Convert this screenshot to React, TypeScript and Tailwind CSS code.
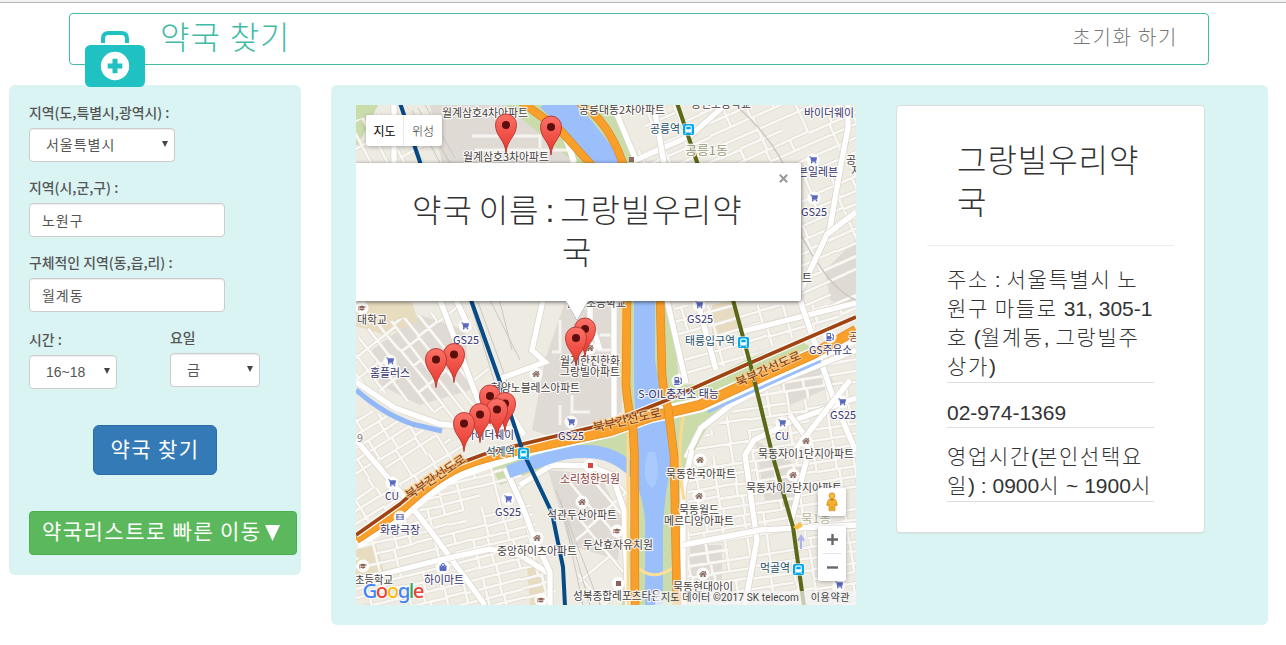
import React from "react";
import {
  FaShoppingCart,
  FaHome,
  FaGraduationCap,
  FaGasPump,
  FaFilm,
  FaShoppingBag,
} from "react-icons/fa";

const FONT = "font-['Liberation_Sans','Noto_Sans_CJK_KR',sans-serif]";

/* Widens the Hangul runs of a line while Latin runs keep their natural spacing. */
function Ko({ children, run: style = "font-light tracking-[0.08em]" }: { children: string; run?: string }) {
  const runs = children.split(/([\uac00-\ud7a3]+)/);
  return (
    <>
      {runs.map((run, i) =>
        i % 2 === 1 ? (
          <span key={i} className={style}>
            {run}
          </span>
        ) : (
          <span key={i}>{run}</span>
        ),
      )}
    </>
  );
}

/* ------------------------------------------------------------------ map */

type Pt = [number, number];

function random(seed: number) {
  let s = seed;
  return () => {
    s = (s * 16807) % 2147483647;
    return s / 2147483647;
  };
}

function streets(cx: number, cy: number, r: number, gap: number, seed: number) {
  const rnd = random(seed);
  let d = "";
  const cross = gap * 1.9;
  for (let y = -r; y <= r; y += gap) {
    let x = -r;
    while (x < r) {
      const len = cross * (1 + Math.floor(rnd() * 4));
      if (rnd() > 0.14) {
        const j = (rnd() - 0.5) * 2;
        d += `M${(cx + x).toFixed(1)} ${(cy + y + j).toFixed(1)}l${len.toFixed(1)} ${((rnd() - 0.5) * 2).toFixed(1)}`;
      }
      x += len;
    }
  }
  for (let x = -r; x <= r; x += cross) {
    let y = -r;
    while (y < r) {
      const len = gap * (1 + Math.floor(rnd() * 3));
      if (rnd() > 0.3) {
        const j = (rnd() - 0.5) * 6;
        d += `M${(cx + x + j).toFixed(1)} ${(cy + y).toFixed(1)}v${len.toFixed(1)}`;
      }
      y += len;
    }
  }
  return d;
}

const districts: { id: string; area: string; c: Pt; r: number; gap: number; rot: number }[] = [
  { id: "nw", area: "M356 120L408 105L430 163H356Z", c: [390, 135], r: 60, gap: 15, rot: 62 },
  { id: "ne", area: "M636 163L650 105H856V310L801 330V163Z", c: [750, 200], r: 170, gap: 12, rot: -24 },
  { id: "w", area: "M372 325L465 305L500 400L480 430L356 382V340Z", c: [425, 370], r: 100, gap: 12, rot: 52 },
  { id: "w2", area: "M356 405L440 436L470 445L400 500L356 530Z", c: [400, 460], r: 100, gap: 11, rot: -32 },
  { id: "sw", area: "M356 548L470 466L520 470L560 605H356Z", c: [450, 545], r: 130, gap: 10, rot: -14 },
  { id: "s", area: "M570 480L630 485L628 605H580Z", c: [600, 545], r: 90, gap: 18, rot: 50 },
  { id: "e1", area: "M675 305H856V312L678 385Z", c: [765, 340], r: 120, gap: 13, rot: -16 },
  { id: "e2", area: "M856 350L752 395L700 440L688 465V605H856Z", c: [780, 490], r: 180, gap: 10.5, rot: -9 },
];

const mainRoads = [
  "M394 105V163",
  "M356 382L395 408L440 424L500 430L520 427",
  "M440 300L478 400L500 432",
  "M543 300L532 350L545 362L502 378L508 410L524 435",
  "M356 440L400 492L430 530L485 605",
  "M380 575L440 560L490 549L520 555L548 573",
  "M505 468L522 505L535 540L550 572V605",
  "M456 300L470 330",
  "M520 485L552 465L590 466L612 475L624 510L628 605",
  "M540 450L552 465",
  "M614 300V425",
  "M590 300V320L600 350",
  "M613 105L636 160L690 136L725 105",
  "M655 112L664 163",
  "M848 105V128L840 170L830 228L801 290",
  "M856 212L826 235",
  "M667 300L686 383",
  "M697 300L716 370",
  "M740 332L856 303",
  "M800 300L812 335L834 400L856 452",
  "M686 458L701 428L732 404L770 385L856 350",
  "M745 605L757 540L745 455L754 440L790 422L856 398",
  "M692 450L683 490V605",
  "M683 545L760 530L856 525",
  "M790 525L806 462L808 440L790 415",
  "M850 380L795 450",
];

const greys = [
  "M430 105H545L585 163H442Z",
  "M565 302H622V412L560 440L532 430L545 360Z",
  "M372 350L420 315L465 330L470 390L420 405L380 385Z",
  "M548 470L600 475L622 520L618 560L570 545Z",
  "M825 270L856 240V310L830 300Z",
  "M755 440L805 470L800 510L765 500Z",
  "M690 545H722V580H690Z",
  "M780 385L825 365L835 385L790 405Z",
];

function Roads({ d, w, color = "#fff", edge = "#d9d4cb" }: { d: string; w: number; color?: string; edge?: string }) {
  return (
    <>
      <path d={d} stroke={edge} strokeWidth={w + 1.4} />
      <path d={d} stroke={color} strokeWidth={w} />
    </>
  );
}

const labels: { t: string; x: number; y: number; w: number; c?: string; s?: number; a?: number }[] = [
  { t: "월계삼호4차아파트", x: 442, y: 117, w: 86 },
  { t: "월계삼호3차아파트", x: 463, y: 161, w: 86 },
  { t: "공릉대동2차아파트", x: 579, y: 113.5, w: 86 },
  { t: "공연초등학교", x: 691, y: 108, w: 60 },
  { t: "바이더웨이", x: 804, y: 117, w: 50, c: "#33336b" },
  { t: "공릉역", x: 650, y: 133, w: 30, c: "#1b4f6b" },
  { t: "공릉1동", x: 685, y: 155, w: 43, c: "#9a9a78", s: 12 },
  { t: "공", x: 846, y: 164, w: 10 },
  { t: "지", x: 851, y: 175, w: 10 },
  { t: "븐일레븐", x: 798, y: 176, w: 40, c: "#33336b" },
  { t: "GS25", x: 801, y: 216, w: 26, c: "#33336b" },
  { t: "트", x: 802, y: 282, w: 10 },
  { t: "월계초등학교", x: 566, y: 307, w: 60 },
  { t: "대학교", x: 357, y: 324, w: 30 },
  { t: "GS25", x: 453, y: 344, w: 26, c: "#33336b" },
  { t: "GS25", x: 687, y: 323, w: 26, c: "#33336b" },
  { t: "홈플러스", x: 370, y: 377, w: 40, c: "#33336b" },
  { t: "월계한진한화", x: 560, y: 365, w: 60 },
  { t: "그랑빌아파트", x: 560, y: 376, w: 60 },
  { t: "현양노블레스아파트", x: 491, y: 392, w: 89 },
  { t: "태릉입구역", x: 685, y: 345, w: 50, c: "#1b4f6b" },
  { t: "GS주유소", x: 809, y: 354, w: 43, c: "#33336b" },
  { t: "공", x: 849, y: 341, w: 10, c: "#7a3a12" },
  { t: "S-OIL충전소 태능", x: 638, y: 398, w: 81, c: "#33336b" },
  { t: "GS25", x: 830, y: 419, w: 26, c: "#33336b" },
  { t: "GS25", x: 558, y: 440, w: 26, c: "#33336b" },
  { t: "CU", x: 775, y: 440, w: 14, c: "#33336b" },
  { t: "바이더웨이", x: 465, y: 439, w: 49, c: "#33336b" },
  { t: "석계역", x: 486, y: 456, w: 29, c: "#1b4f6b" },
  { t: "9", x: 357, y: 442, w: 6, c: "#777" },
  { t: "묵동자이1단지아파트", x: 758, y: 458, w: 96 },
  { t: "묵동한국아파트", x: 666, y: 478, w: 70 },
  { t: "소리청한의원", x: 560, y: 483, w: 60, c: "#8a3b3b" },
  { t: "묵동자이2단지아파트", x: 746, y: 492, w: 96 },
  { t: "CU", x: 385, y: 500, w: 14, c: "#33336b" },
  { t: "GS25", x: 495, y: 516, w: 26, c: "#33336b" },
  { t: "석관두산아파트", x: 547, y: 519, w: 70 },
  { t: "묵동월드", x: 679, y: 514, w: 40 },
  { t: "메르디앙아파트", x: 664, y: 525, w: 70 },
  { t: "묵1동", x: 801, y: 523, w: 30, c: "#b5b295", s: 12 },
  { t: "화랑극장", x: 380, y: 534, w: 40, c: "#33336b" },
  { t: "두산효자유치원", x: 583, y: 549, w: 70 },
  { t: "중앙하이츠아파트", x: 497, y: 555, w: 80 },
  { t: "먹골역", x: 760, y: 572, w: 30, c: "#1b4f6b" },
  { t: "초등학교", x: 355, y: 584, w: 38 },
  { t: "하이마트", x: 424, y: 584, w: 40, c: "#33336b" },
  { t: "묵동현대아이", x: 673, y: 591, w: 60 },
  { t: "성북종합레포츠타운", x: 573, y: 600, w: 88 },
  { t: "북부간선도로", x: 409, y: 500, w: 70, c: "#7a3a12", a: -34, s: 12 },
  { t: "북부간선도로", x: 594, y: 432, w: 70, c: "#7a3a12", a: -13, s: 12 },
  { t: "북부간선도로", x: 738, y: 387, w: 70, c: "#7a3a12", a: -24, s: 12 },
];

const pois: { k: "cart" | "home" | "school" | "gas" | "film" | "bag"; x: number; y: number }[] = [
  { k: "cart", x: 813, y: 160 },
  { k: "cart", x: 814, y: 198 },
  { k: "cart", x: 465, y: 326 },
  { k: "cart", x: 699, y: 305 },
  { k: "cart", x: 390, y: 361 },
  { k: "cart", x: 571, y: 422 },
  { k: "cart", x: 842, y: 402 },
  { k: "cart", x: 782, y: 423 },
  { k: "cart", x: 392, y: 483 },
  { k: "cart", x: 508, y: 499 },
  { k: "cart", x: 839, y: 585 },
  { k: "home", x: 590, y: 348 },
  { k: "home", x: 536, y: 374 },
  { k: "home", x: 806, y: 441 },
  { k: "home", x: 700, y: 460 },
  { k: "home", x: 793, y: 475 },
  { k: "home", x: 699, y: 496 },
  { k: "home", x: 582, y: 502 },
  { k: "home", x: 537, y: 538 },
  { k: "home", x: 703, y: 574 },
  { k: "school", x: 362, y: 308 },
  { k: "school", x: 363, y: 566 },
  { k: "school", x: 541, y: 600 },
  { k: "school", x: 617, y: 531 },
  { k: "gas", x: 830, y: 337 },
  { k: "gas", x: 678, y: 381 },
  { k: "film", x: 400, y: 517 },
  { k: "bag", x: 443, y: 567 },
];

const poiIcons = {
  cart: { I: FaShoppingCart, c: "#5b69c0" },
  home: { I: FaHome, c: "#8d6e63" },
  school: { I: FaGraduationCap, c: "#8d6259" },
  gas: { I: FaGasPump, c: "#5b69c0" },
  film: { I: FaFilm, c: "#5b69c0" },
  bag: { I: FaShoppingBag, c: "#5b69c0" },
};

const stations: Pt[] = [
  [688.5, 129.5],
  [743.5, 342.5],
  [523.5, 453.5],
  [798.5, 569.5],
];

const pins: Pt[] = [
  [506, 125],
  [551, 127],
  [454, 354.5],
  [436, 359.5],
  [490, 396],
  [505, 403.5],
  [497, 409.5],
  [480, 414.5],
  [464, 423.5],
  [585, 329],
  [576, 338],
];

function MapDrawing() {
  return (
    <svg viewBox="356 105 500 500" width="500" height="500" className="block" aria-label="지도">
      <defs>
        <linearGradient id="pin" x1="0" y1="0" x2="0" y2="1">
          <stop offset="0" stopColor="#fb7268" />
          <stop offset="1" stopColor="#e5352a" />
        </linearGradient>
        {districts.map((d) => (
          <clipPath key={d.id} id={d.id}>
            <path d={d.area} />
          </clipPath>
        ))}
      </defs>
      <rect x="356" y="105" width="500" height="500" fill="#eeebe3" />
      {greys.map((g) => (
        <path key={g} d={g} fill="#dfdad4" />
      ))}
      <g fill="#e8dcc0">
        <path d="M356 302H412L418 322L385 335L356 326Z" />
        <path d="M712 305L735 300L740 330L712 336Z" />
        <path d="M356 550L376 545L386 578L356 586Z" />
        <path d="M527 565L545 572L545 605H530Z" />
      </g>
      <g fill="#cbdcab">
        <path d="M356 105H378L358 145L356 145Z" />
        <path d="M505 105H610L640 163H575Z" />
        <path d="M622 300H670L680 385L720 382L752 392L716 412L700 440L684 475V605H622L635 480L610 455L575 455L500 485L490 462L625 430Z" />
        <path d="M670 398L750 358L800 340L812 348L760 382L700 402Z" />
        <path d="M494 398L510 398L515 420L500 415Z" />
      </g>

      <g fill="none" strokeLinecap="butt">
        {districts.map((d, i) => {
          const path = streets(d.c[0], d.c[1], d.r, d.gap, 71 + i * 913);
          return (
            <g key={d.id} clipPath={`url(#${d.id})`}>
              <g transform={`rotate(${d.rot} ${d.c[0]} ${d.c[1]})`}>
                <Roads d={path} w={2.6} color="#faf8f4" edge="#dfdad1" />
              </g>
            </g>
          );
        })}
        <path
          d="M470 302L500 400M478 302L510 390M490 300L520 360M500 302L512 350M412 110L440 163M418 108L450 163M425 105L455 158M556 490L600 605M560 500L590 605M565 520L583 605"
          stroke="#c9c7c3"
          strokeWidth="1"
        />
        <path d="M475 150H570M472 136H540V148M560 320V352H552M600 335H612V350H598V335M572 395V412H590M560 405V425" stroke="#f6f4f0" strokeWidth="3" />
        <path d="M801 235Q830 290 856 300M550 105Q572 130 586 163M735 105Q800 160 801 235" stroke="#cbc8c2" strokeWidth="1.5" />
        {mainRoads.map((d) => (
          <Roads key={d} d={d} w={5.4} />
        ))}
        <path d="M562 105Q580 125 590 163" stroke="#fff" strokeWidth="6" transform="translate(-16 0)" />

        <path d="M356 390Q370 402 383 410T412 424L442 431" stroke="#92b8f7" strokeWidth="5" />
        <path d="M550 98L580 128L615 172" stroke="#9bbffb" strokeWidth="27" />
        <path d="M508 472Q530 464 550 457T595 452Q620 455 640 478" stroke="#9bbffb" strokeWidth="13" />
        <path
          d="M634 300H655V360L662 405L670 430V470Q664 500 663 530V605H645V520Q643 495 633 478L636 440L634 380Z"
          fill="#9bbffb"
        />
        <path d="M648 452Q640 480 652 488Q662 480 655 452Z" fill="#a9cafd" />
        <path d="M638 568Q655 582 674 567" stroke="#fbe09a" strokeWidth="3" />
        <path d="M684 412Q676 455 684 500M622 300V380L628 430V605" stroke="#fbd98f" strokeWidth="3" />

        <path d="M356 542L400 514Q440 478 466 469T530 448L610 430L650 416L700 405L750 383L813 355L856 335" stroke="#fff" strokeWidth="15" />
        <path d="M700 404L750 381L813 353" stroke="#9bbffb" strokeWidth="3" transform="translate(8 8)" />
        <Roads d="M356 539L400 510Q438 474 466 464T530 448L610 431L650 417L700 405L750 382L813 354L856 330" w={9} color="#f9a02b" edge="#df8a24" />
        <Roads d="M519 100L560 130L594 168" w={7} color="#f9a02b" edge="#df8a24" />
        <Roads d="M576 100Q610 120 625 170" w={7} color="#f9a02b" edge="#df8a24" />
        <Roads d="M627 295L626 385Q628 410 633 428L634.5 455L635 610" w={7.2} color="#f9a02b" edge="#df8a24" />
        <Roads d="M660 295L662 375Q664 395 668 408L674 455L677 610" w={7.2} color="#f9a02b" edge="#df8a24" />

        <path d="M356 535L400 504Q435 473 463 462L490 452L610 423L667 400L750 363L856 317" stroke="#fff" strokeWidth="6" />
        <path d="M356 535L400 504Q435 473 463 462L490 452L610 423L667 400L750 363L856 317" stroke="#a04414" strokeWidth="3.6" />
        <path d="M400 103L421 165M471 300L500 382L523 452L552 513L563 567L565 606" stroke="#064a86" strokeWidth="4" />
        <path d="M677 103L698 165M733 300L750 363L773 457L793 527L804 606" stroke="#5a6817" strokeWidth="4" />
        <path d="M801 549V538M798 541L801 536L804 541" stroke="#aab4e8" strokeWidth="2" />
      </g>
      <path d="M793 527L800 522L803 526L797 530Z" fill="#f9c04a" />
      <rect x="629" y="157" width="5" height="5" fill="#8d6e63" />

      {pois.map((p) => {
        const { I, c } = poiIcons[p.k];
        return (
          <g key={`${p.x}-${p.y}`}>
            <circle cx={p.x} cy={p.y} r="6.5" fill="#fff" fillOpacity="0.9" />
            <I x={p.x - 4} y={p.y - 4} size={8} color={c} />
          </g>
        );
      })}
      <circle cx="590" cy="465.500" r="6.500" fill="#fff" />
      <rect x="588" y="463" width="5" height="5" fill="#d9443c" />
      <circle cx="618" cy="583.500" r="6.500" fill="#fff" />
      <rect x="616" y="581" width="5" height="5" fill="#8d6259" />

      {labels.map((l, i) => (
        <text
          key={i}
          x={l.x}
          y={l.y}
          textLength={l.w}
          lengthAdjust="spacingAndGlyphs"
          fontSize={l.s ?? 11}
          fill={l.c ?? "#45403c"}
          stroke={l.a ? "#fbc987" : "#fff"}
          strokeWidth="2.4"
          strokeOpacity="0.85"
          strokeLinejoin="round"
          paintOrder="stroke"
          transform={l.a ? `rotate(${l.a} ${l.x} ${l.y})` : undefined}
          className="font-['Noto_Sans_CJK_KR',sans-serif]"
        >
          {l.t}
        </text>
      ))}

      {stations.map(([x, y]) => (
        <g key={x}>
          <rect x={x - 6} y={y - 6} width="12" height="12" rx="1.5" fill="#fff" />
          <rect x={x - 5.5} y={y - 5.5} width="11" height="11" rx="1.5" fill="#00a8f0" />
          <rect x={x - 3.3} y={y - 4} width="6.600" height="7" rx="1.5" fill="#fff" />
          <rect x={x - 2.2} y={y - 2.8} width="4.400" height="2.600" fill="#00a8f0" />
          <path d={`M${x - 2.5} ${y + 3}l-1 1.500M${x + 2.5} ${y + 3}l1 1.500`} stroke="#fff" />
        </g>
      ))}

      {pins.map(([x, y]) => (
        <g key={`${x}-${y}`} transform={`translate(${x} ${y})`}>
          <path
            d="M0 28C-1 14-10.500 12-10.500-.5A10.500 10.500 0 0 1 10.500-.5C10.500 12 1 14 0 28Z"
            fill="url(#pin)"
            stroke="#b5332b"
            strokeWidth="0.9"
          />
          <circle r="4" fill="#5a0f0c" />
        </g>
      ))}
    </svg>
  );
}

function Pegman() {
  return (
    <svg viewBox="0 0 12 20" width="12" height="20" className="block">
      <path
        d="M3.500 7H8.500Q10.600 7.500 11.300 13L10 14L9 12V18.800H6.600L6 14.500L5.400 18.800H3V12L2 14L.7 13Q1.400 7.500 3.500 7Z"
        fill="#f4b12f"
        stroke="#d58b16"
        strokeWidth="0.7"
      />
      <circle cx="6" cy="3.700" r="2.900" fill="#f9bc3c" stroke="#c98417" strokeWidth="0.7" />
      <path d="M3.500 7L6 9L8.500 7Z" fill="#c47d12" />
    </svg>
  );
}

const heading = "font-light tracking-[0.03em]";

function MapView() {
  return (
    <div className="relative h-[500px] w-[500px] shrink-0 overflow-hidden">
      <MapDrawing />

      <div className="absolute left-[10px] top-[10px] flex h-[31px] w-[76px] rounded-[2px] bg-white font-['Noto_Sans_CJK_KR',sans-serif] text-[11px] leading-[30px] shadow-[0_1px_4px_rgba(0,0,0,0.3)]">
        <button className="w-[38px] border-r border-[#e8e8e8] text-[12px] text-black">지도</button>
        <button className="w-[38px] text-[12px] font-light text-[#333]">위성</button>
      </div>

      <div className="absolute left-0 top-[58px] h-[138px] w-[445px] rounded-r-[2px] bg-white pl-[56px] pt-[27px] text-[32px] leading-[42px] text-[#333] shadow-[0_1px_4px_rgba(0,0,0,0.6)]">
        <p className="whitespace-nowrap [word-spacing:-3px]">
          <Ko run={heading}>약국 이름 : 그랑빌우리약</Ko>
        </p>
        <p className="pl-[150px]">
          <Ko run={heading}>국</Ko>
        </p>
        <svg viewBox="0 0 9 9" width="9" height="9" className="absolute right-[13px] top-[11px]">
          <path d="M.8.8L8.200 8.200M8.200.8L.8 8.200" stroke="#999" strokeWidth="2" />
        </svg>
      </div>
      <svg viewBox="0 0 28 22" width="28" height="22" className="absolute left-[207px] top-[196px]">
        <path d="M3 0L14 19.500L25 0" fill="#fff" stroke="#b8b8b8" strokeWidth="0.8" />
        <path d="M3.500 -1H24.500V0.500H3.500Z" fill="#fff" />
      </svg>

      <div className="absolute left-[462px] top-[383px] flex h-[28px] w-[28px] items-center justify-center rounded-[2px] bg-white shadow-[0_1px_4px_rgba(0,0,0,0.3)]">
        <Pegman />
      </div>
      <div className="absolute left-[462px] top-[421px] flex h-[55px] w-[28px] flex-col items-center rounded-[2px] bg-white shadow-[0_1px_4px_rgba(0,0,0,0.3)]">
        <div className="flex h-[27px] items-center">
          <svg viewBox="0 0 11 11" width="11" height="11">
            <path d="M5.500 0V11M0 5.500H11" stroke="#666" strokeWidth="2.400" />
          </svg>
        </div>
        <div className="h-px w-[18px] bg-[#e3e3e3]" />
        <div className="flex h-[27px] items-center">
          <svg viewBox="0 0 11 11" width="11" height="11">
            <path d="M0 5.500H11" stroke="#666" strokeWidth="2.400" />
          </svg>
        </div>
      </div>

      <div className="absolute bottom-0 right-0 flex h-[14px] w-[201px] justify-between whitespace-nowrap bg-[#f5f5f5]/70 pl-[6px] pr-[6px] font-[Roboto,'Noto_Sans_CJK_KR',sans-serif] text-[10px] leading-[14px] text-[#444]">
        <span className="tracking-[0.015em]">지도 데이터 ©2017 SK telecom</span>
        <span className="tracking-[0.06em]">이용약관</span>
      </div>

      <svg viewBox="0 0 70 26" width="70" height="26" className="absolute left-[4px] top-[472px]">
        <text
          x="2.500"
          y="20.500"
          textLength="62"
          fontSize="20.500"
          stroke="#fff"
          strokeWidth="2"
          strokeOpacity="0.8"
          paintOrder="stroke"
          className="font-['Noto_Sans',sans-serif] font-medium"
        >
          <tspan fill="#4285f4">G</tspan>
          <tspan fill="#ea4335">o</tspan>
          <tspan fill="#fbbc05">o</tspan>
          <tspan fill="#4285f4">g</tspan>
          <tspan fill="#34a853">l</tspan>
          <tspan fill="#ea4335">e</tspan>
        </text>
      </svg>
    </div>
  );
}

/* ----------------------------------------------------------------- form */

function Label({ children }: { children: string }) {
  return (
    <label className="relative -top-px mb-[5px] block h-5 whitespace-pre font-['Noto_Sans_CJK_KR',sans-serif] text-[13.900px] font-medium leading-5 text-[#555]">
      {children}
    </label>
  );
}

const field =
  "h-[34px] rounded-[4px] border border-[#ccc] bg-white text-[14px] leading-5 text-[#555] shadow-[inset_0_1px_1px_rgba(0,0,0,0.075)]";

function Select({ value, className }: { value: string; className: string }) {
  return (
    <button className={`${field} ${className} flex items-center justify-between pl-[16px] pr-[6px]`}>
      <span>
        <Ko run="tracking-[0.07em]">{value}</Ko>
      </span>
      <svg viewBox="0 0 6 6" width="6" height="6" className="mb-[2px]">
        <path d="M0 0H6L3 6Z" fill="#444" />
      </svg>
    </button>
  );
}

function SearchPanel() {
  return (
    <aside className="h-[490px] w-[292px] shrink-0 rounded-[6px] bg-[#d9f4f3] pl-5 pt-[18px]">
      <Label>지역(도,특별시,광역시) :</Label>
      <Select value="서울특별시" className="w-[146px]" />
      <div className="mt-4">
        <Label>지역(시,군,구) :</Label>
        <input defaultValue="노원구" className={`${field} block w-[196px] pl-[12px] tracking-[0.07em]`} />
      </div>
      <div className="mt-4">
        <Label>구체적인 지역(동,읍,리) :</Label>
        <input defaultValue="월계동" className={`${field} block w-[196px] pl-[12px] tracking-[0.07em]`} />
      </div>
      <div className="mt-4 flex h-[61px] gap-[53px]">
        <div className="pt-[2px]">
          <Label>시간 :</Label>
          <Select value="16~18" className="w-[88px]" />
        </div>
        <div>
          <Label>요일</Label>
          <Select value="금" className="w-[90px]" />
        </div>
      </div>
      <button className="ml-[64px] mt-9 block h-[50px] w-[124px] rounded-[6px] border border-[#2e6da4] bg-[#337ab7] pb-px text-[21px] text-white">
        <Ko run="tracking-[0.07em]">약국 찾기</Ko>
      </button>
      <button className="mt-9 flex h-[44px] w-[268px] items-center whitespace-nowrap rounded-[4px] border border-[#4cae4c] bg-[#5cb85c] pb-[2px] pl-[12px] text-[21px] text-white">
        <span>
          <Ko run="tracking-[0.07em]">약국리스트로 빠른 이동</Ko>
        </span>
        <svg viewBox="0 0 15 16" width="15" height="16" className="ml-[3px] mt-[2px]">
          <path d="M0 0H15L7.500 16Z" fill="#fff" />
        </svg>
      </button>
    </aside>
  );
}

/* --------------------------------------------------------------- details */

function DetailCard() {
  return (
    <section className="h-[428px] w-[309px] rounded-[4px] border border-[#ddd] bg-white pl-[30px] pr-[30px] pt-[34px] text-[#333] shadow-[0_1px_1px_rgba(0,0,0,0.05)]">
      <h2 className="h-[106px] border-b border-[#eee] pl-[30px] text-[32px] leading-[42px]">
        <Ko run={heading}>그랑빌우리약</Ko>
        <br />
        <Ko run={heading}>국</Ko>
      </h2>
      <div className="ml-[20px] w-[207px] whitespace-nowrap text-[21px] leading-[29px]">
        <p className="h-[137px] border-b border-[#ddd] pt-[19px]">
          <Ko>주소 : 서울특별시 노</Ko>
          <br />
          <Ko>원구 마들로 31, 305-1</Ko>
          <br />
          <Ko>호 (월계동, 그랑빌주</Ko>
          <br />
          <Ko>상가)</Ko>
        </p>
        <p className="h-[45px] border-b border-[#ddd] pt-[15px]">02-974-1369</p>
        <p className="h-[74px] border-b border-[#ddd] pt-[14px]">
          <Ko>영업시간(본인선택요</Ko>
          <br />
          <Ko>일) : 0900시 ~ 1900시</Ko>
        </p>
      </div>
    </section>
  );
}

function FirstAidKit() {
  return (
    <svg viewBox="0 0 60 57" width="60" height="57" className="absolute left-[15px] top-[16px]">
      <path d="M18 13V8.500Q18 3 23.500 3H36.500Q42 3 42 8.500V13" fill="none" stroke="#20c1c3" strokeWidth="4" />
      <rect y="15" width="60" height="42" rx="5.500" fill="#20c1c3" />
      <circle cx="30" cy="36" r="14.200" fill="#fff" />
      <path d="M30 28.700V43.300M22.700 36H37.300" stroke="#20c1c3" strokeWidth="5" />
    </svg>
  );
}

export default function App() {
  return (
    <div className={`${FONT} h-[645px] w-[1286px] overflow-hidden bg-white`}>
      <div className="h-[3px] border-b border-[#b5b5b5] bg-[#f2f2f2]" />
      <header className="relative ml-[69px] mt-[10px] flex h-[52px] w-[1140px] justify-between rounded-[4px] border border-[#44bba4] pl-[90px] pr-[30px]">
        <FirstAidKit />
        <h1 className="text-[32px] leading-[48px] text-[#41bba5]">
          <Ko run={heading}>약국 찾기</Ko>
        </h1>
        <a className="text-[20px] leading-[49px] text-[#777]">
          <Ko>초기화 하기</Ko>
        </a>
      </header>
      <main className="ml-[9px] mt-5 flex gap-[30px]">
        <SearchPanel />
        <div className="flex h-[540px] w-[937px] gap-10 rounded-[6px] bg-[#d9f4f3] pl-[25px] pt-5">
          <MapView />
          <DetailCard />
        </div>
      </main>
    </div>
  );
}
